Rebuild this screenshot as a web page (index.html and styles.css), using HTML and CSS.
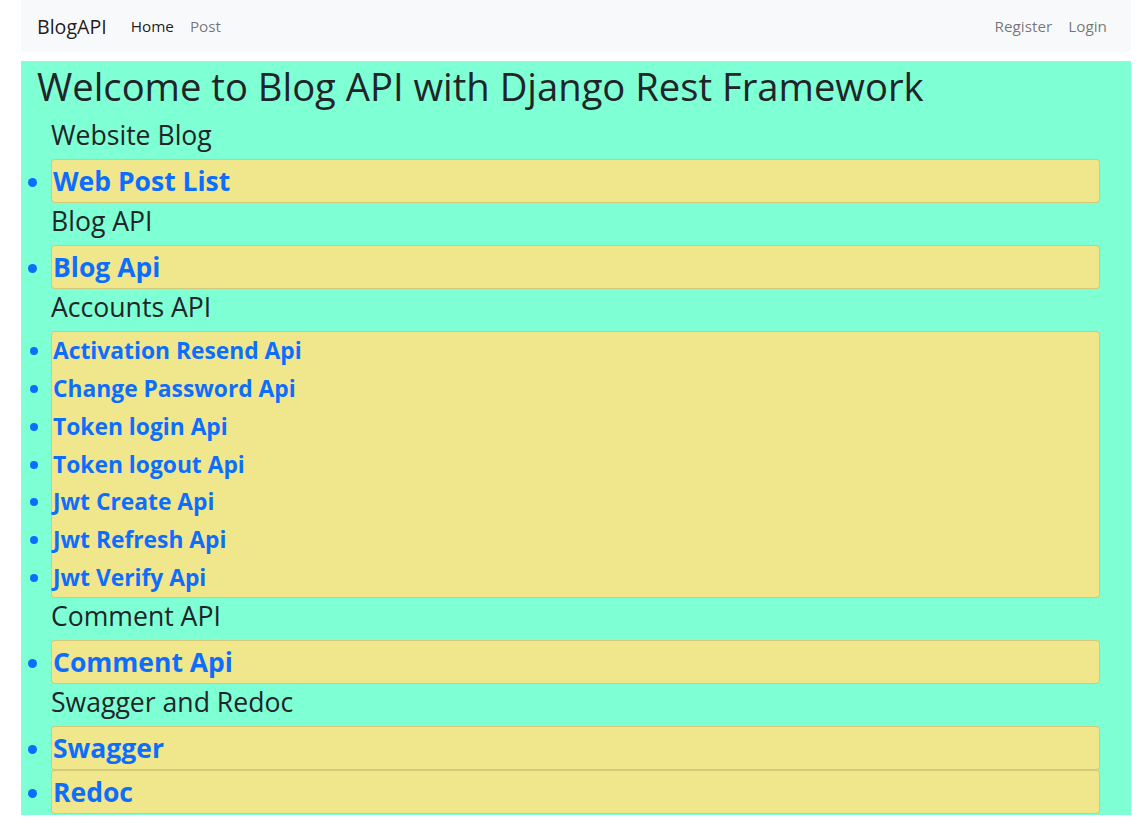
FILE: index.html
```html
<!DOCTYPE html>
<html lang="en">
<head>
<meta charset="utf-8">
<title>BlogAPI</title>
<link rel="stylesheet" href="styles.css">
</head>
<body>
<div class="page">
  <nav class="navbar">
    <a class="brand" href="#">BlogAPI</a>
    <div class="nav-left">
      <a class="nav-link active" href="#">Home</a>
      <a class="nav-link" href="#">Post</a>
    </div>
    <div class="nav-right">
      <a class="nav-link" href="#">Register</a>
      <a class="nav-link" href="#">Login</a>
    </div>
  </nav>
  <main class="main">
    <h1 class="title">Welcome to Blog API with Django Rest Framework</h1>
    <div class="content">
      <h3 class="section">Website Blog</h3>
      <ul class="box"><li><a href="#">Web Post List</a></li></ul>
      <h3 class="section">Blog API</h3>
      <ul class="box"><li><a href="#">Blog Api</a></li></ul>
      <h3 class="section">Accounts API</h3>
      <ul class="box box-small">
        <li><a href="#">Activation Resend Api</a></li>
        <li><a href="#">Change Password Api</a></li>
        <li><a href="#">Token login Api</a></li>
        <li><a href="#">Token logout Api</a></li>
        <li><a href="#">Jwt Create Api</a></li>
        <li><a href="#">Jwt Refresh Api</a></li>
        <li><a href="#">Jwt Verify Api</a></li>
      </ul>
      <h3 class="section">Comment API</h3>
      <ul class="box"><li><a href="#">Comment Api</a></li></ul>
      <h3 class="section">Swagger and Redoc</h3>
      <ul class="box"><li><a href="#">Swagger</a></li></ul>
      <ul class="box"><li><a href="#">Redoc</a></li></ul>
    </div>
  </main>
</div>
</body>
</html>
```

FILE: styles.css
```css
* { box-sizing: border-box; }
body {
  margin: 0;
  background: #fff;
  font-family: "Open Sans", "Noto Sans", sans-serif;
  color: #212529;
}
a { text-decoration: none; }
.page {
  margin-left: 21px;
  width: 1110px;
}
.navbar {
  display: flex;
  align-items: center;
  height: 52px;
  padding: 0 16px;
  background: #f8f9fa;
}
.brand {
  font-size: 19.6px;
  color: rgba(0,0,0,.9);
  margin-right: 16px;
}
.nav-left, .nav-right { display: flex; }
.nav-right { margin-left: auto; }
.nav-link {
  font-size: 15.3px;
  padding: 0 8px;
  color: rgba(0,0,0,.55);
}
.nav-link.active { color: rgba(0,0,0,.9); }
.main {
  margin-top: 9px;
  padding-bottom: 1px;
  background: #7fffd4;
}
.title {
  margin: 0 0 9px;
  padding: 3px 0 0 16px;
  font-size: 38.2px;
  font-weight: 400;
  line-height: 44px;
  color: #212529;
}
.content { margin: 0 31px 0 30px; }
.section {
  margin: 0 0 8px;
  padding-top: 2px;
  font-size: 26.6px;
  font-weight: 400;
  line-height: 32px;
}
.box {
  margin: 0;
  padding: 0 0 0 1px;
  background: #f0e68c;
  border: 1px solid rgba(0,0,0,.125);
  border-radius: 4px;
  color: #0d6efd;
}
.box li {
  font-size: 26.5px;
  font-weight: 700;
  line-height: 42px;
}
.box a { color: #0d6efd; }
.box-small li {
  font-size: 22.8px;
  line-height: 37.85px;
}
```
